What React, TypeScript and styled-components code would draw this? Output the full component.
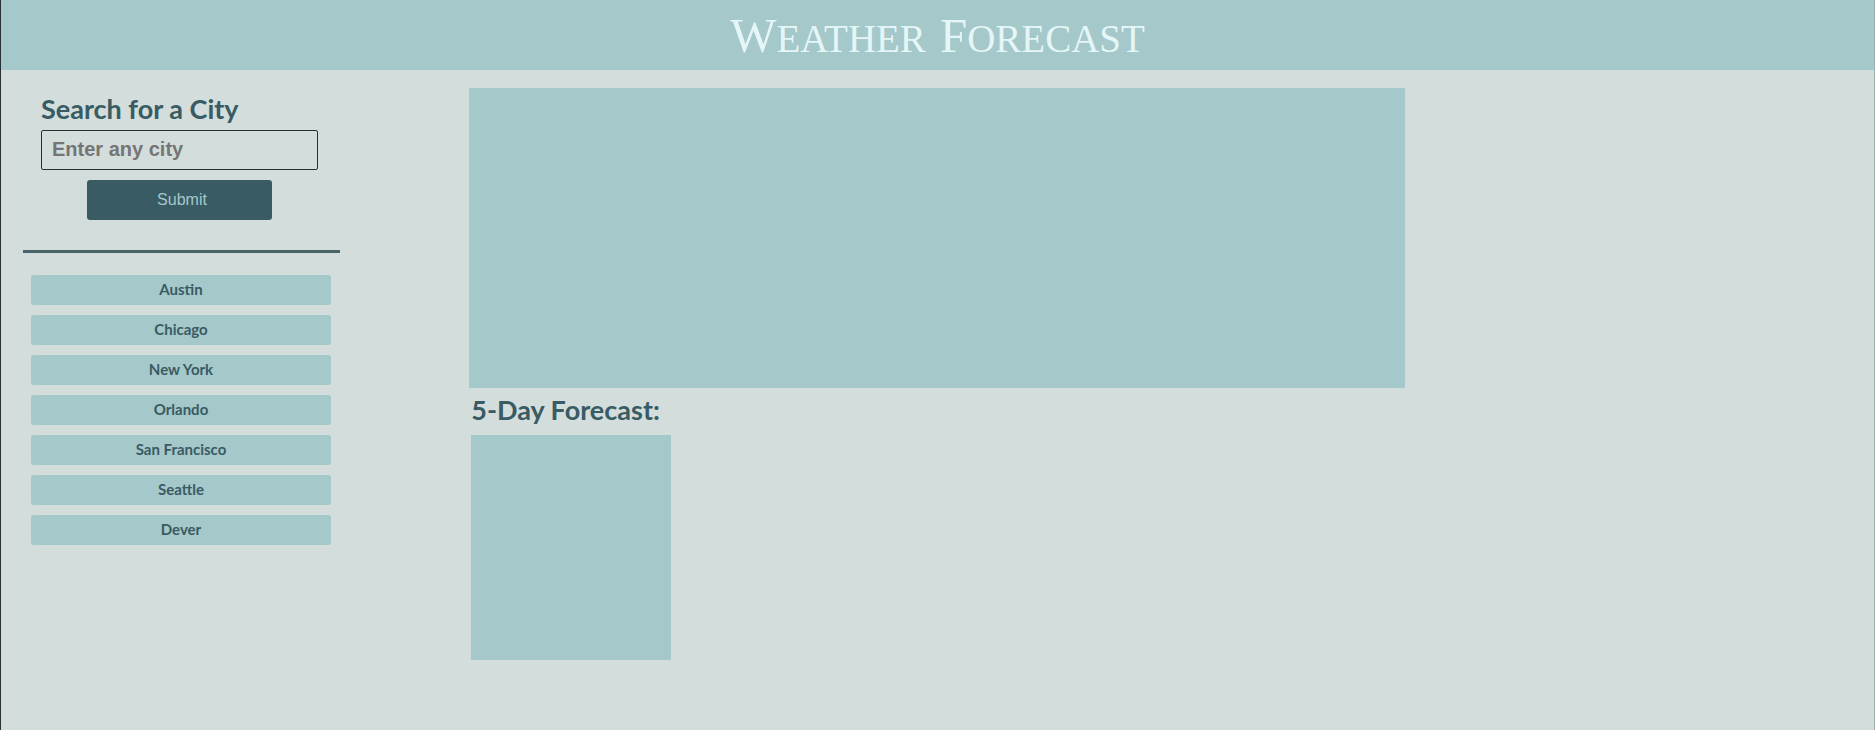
import React from "react";
import styled, { createGlobalStyle } from "styled-components";

const teal = "#a5c8ca";
const ink = "#395b63";
const mist = "#d3dddc";

const GlobalStyle = createGlobalStyle`
  *, *::before, *::after { box-sizing: border-box; }
  body {
    margin: 0;
    background: ${mist};
    color: ${ink};
    font-family: Lato, "Noto Sans", sans-serif;
  }
`;

const Page = styled.div`
  min-height: 100vh;
  border-left: 1px solid #2b3032;
  border-right: 1px solid #9fb0b0;
`;

const Header = styled.header`
  display: flex;
  justify-content: center;
  align-items: center;
  height: 70px;
  padding-top: 4px;
  background: ${teal};
`;

const Title = styled.h1`
  display: flex;
  gap: 14px;
  margin: 0;
  color: #e4f6f6;
  font-family: "Liberation Serif", serif;
  font-size: 39px;
  font-weight: 400;
  line-height: 56px;
  text-transform: uppercase;
`;

const Word = styled.span`
  display: block;
  &::first-letter { font-size: 49px; }
`;

const Body = styled.div`
  display: grid;
  grid-template-columns: 25% 1fr;
  padding-top: 18px;
`;

const Sidebar = styled.aside`
  padding-left: 22px;
`;

const SearchForm = styled.form`
  display: flex;
  flex-direction: column;
  width: 277px;
  margin-left: 18px;
  padding-top: 3px;
`;

const SearchLabel = styled.label`
  margin-bottom: 3px;
  font-size: 27px;
  font-weight: 700;
  line-height: 36px;
`;

const SearchInput = styled.input`
  width: 100%;
  height: 40px;
  padding: 0 10px 2px;
  border: 1px solid #263033;
  border-radius: 2px;
  background: transparent;
  color: ${ink};
  font: 700 20px "Liberation Sans", Arial, sans-serif;
  &::placeholder { color: #757575; opacity: 1; }
`;

const SubmitButton = styled.button`
  align-self: center;
  width: 185px;
  height: 40px;
  margin-top: 10px;
  padding: 0 0 0 5px;
  border: 0;
  border-radius: 3px;
  background: ${ink};
  color: ${teal};
  font: 400 16px "Liberation Sans", Arial, sans-serif;
`;

const Divider = styled.hr`
  width: 317px;
  margin: 30px 0 22px;
  border: 0;
  border-top: 3px solid #486469;
`;

const CityList = styled.ul`
  display: flex;
  flex-direction: column;
  gap: 10px;
  width: 300px;
  margin: 0 0 0 8px;
  padding: 0;
  list-style: none;
`;

const CityButton = styled.button`
  display: block;
  width: 100%;
  height: 30px;
  padding: 0 0 2px;
  border: 0;
  border-radius: 3px;
  background: ${teal};
  color: ${ink};
  font: 700 15px Lato, "Noto Sans", sans-serif;
`;

const CurrentWeather = styled.section`
  width: 66.6%;
  height: 300px;
  border-radius: 1px;
  background: ${teal};
`;

const Forecast = styled.section`
  padding: 4px 2px;
`;

const ForecastTitle = styled.h2`
  margin: 0 0 7px;
  font-size: 27px;
  font-weight: 700;
  line-height: 36px;
`;

const DayCard = styled.div`
  width: 200px;
  height: 225px;
  background: ${teal};
`;

const cities = ["Austin", "Chicago", "New York", "Orlando", "San Francisco", "Seattle", "Dever"];

export default function App() {
  return (
    <Page>
      <GlobalStyle />
      <Header>
        <Title>
          <Word>Weather</Word>
          <Word>Forecast</Word>
        </Title>
      </Header>
      <Body>
        <Sidebar>
          <SearchForm onSubmit={(event) => event.preventDefault()}>
            <SearchLabel htmlFor="city">Search for a City</SearchLabel>
            <SearchInput id="city" type="text" placeholder="Enter any city" />
            <SubmitButton type="submit">Submit</SubmitButton>
          </SearchForm>
          <Divider />
          <CityList>
            {cities.map((city) => (
              <li key={city}>
                <CityButton type="button">{city}</CityButton>
              </li>
            ))}
          </CityList>
        </Sidebar>
        <main>
          <CurrentWeather aria-label="Current weather" />
          <Forecast>
            <ForecastTitle>5-Day Forecast:</ForecastTitle>
            <DayCard />
          </Forecast>
        </main>
      </Body>
    </Page>
  );
}
